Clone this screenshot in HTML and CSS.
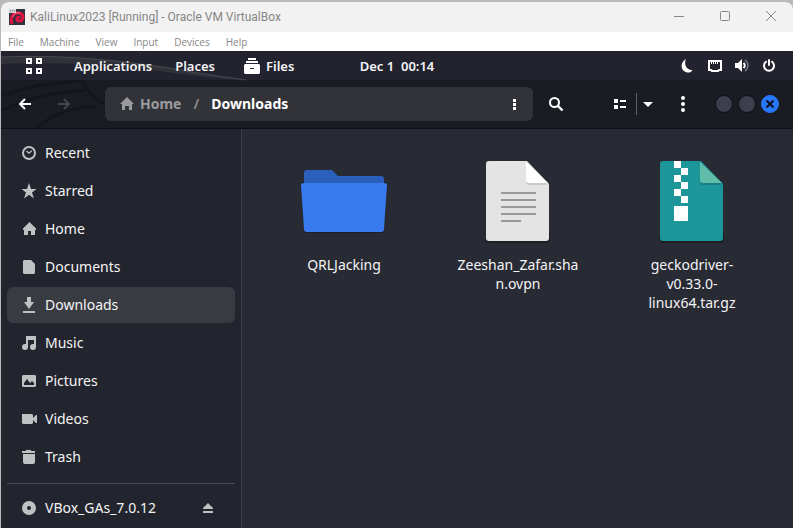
FILE: index.html
```html
<!DOCTYPE html>
<html lang="en">
<head>
<meta charset="utf-8">
<title>KaliLinux2023 [Running] - Oracle VM VirtualBox</title>
<link rel="stylesheet" href="styles.css">
</head>
<body>
<div class="window">
  <header class="titlebar">
    <svg class="app-icon" width="16" height="16" viewBox="0 0 16 16"><path fill="#30323e" d="M0 0h16v16H0z"/><path fill="none" stroke="#e0143f" stroke-width="3" d="M3 15C1 8 4 4 9 4c5 0 6 4 4 7-2 2-6 1-5-2 1-1 2-1 3 0"/><path fill="none" stroke="#ff8195" d="M4 8c1-4 4-5 7-4"/><path fill="#d5d5da" d="M0 0h7v4H0z"/><path stroke="#777" d="M1 2h1m1 0h1m1 0h1"/></svg>
    <h1 class="title">KaliLinux2023 [Running] - Oracle VM VirtualBox</h1>
    <div class="window-buttons">
      <button aria-label="Minimize"><svg width="12" height="12" viewBox="0 0 12 12"><path d="M1 5.500h10"/></svg></button>
      <button aria-label="Maximize"><svg width="12" height="12" viewBox="0 0 12 12"><rect x="1.500" y="0.500" width="9" height="9" rx="1"/></svg></button>
      <button aria-label="Close"><svg width="12" height="12" viewBox="0 0 12 12"><path d="M1 0l10 10M11 0L1 10"/></svg></button>
    </div>
  </header>
  <nav class="menubar">
    <button>File</button><button>Machine</button><button>View</button><button>Input</button><button>Devices</button><button>Help</button>
  </nav>
  <main class="desktop">
    <svg class="wallpaper" width="250" height="77" viewBox="0 0 250 77" aria-hidden="true">
      <path fill="#36363c" opacity=".8" d="M0 6c60-3 130 4 185 14 25 4 45 7 60 9-45-1-110-15-160-16C50 12 20 12 0 13z"/>
      <path fill="none" stroke="#55555a" opacity=".7" d="M0 6c60-3 130 4 185 14 25 4 45 7 60 9"/>
      <path fill="none" stroke="#12141a" stroke-width="3" opacity=".7" d="M0 45c25-9 50-14 78-15M0 60c30-14 55-20 84-20M80 30c10 12 12 20 30 26M35 77c20-16 35-20 60-22"/>
    </svg>
    <div class="panel">
      <div class="panel-left">
        <button class="activities" aria-label="Activities"><svg width="16" height="16" viewBox="0 0 16 16"><path fill="none" stroke="#fff" stroke-width="2" d="M1 1h4v4H1zM11 1h4v4h-4zM1 11h4v4H1zM11 11h4v4h-4z"/></svg></button>
        <button class="applications">Applications</button>
        <button class="places">Places</button>
        <button class="files"><svg width="16" height="16" viewBox="0 0 16 16"><path fill="#fff" d="M4 0h8v2H4zM2 3h12v2H2zM1 6h14l1 1v8l-1 1H1l-1-1V7z"/><path fill="#20212c" d="M6 10h4v1H6z"/></svg>Files</button>
      </div>
      <button class="clock">Dec 1&nbsp; 00:14</button>
      <div class="tray">
        <button aria-label="Night light"><svg width="16" height="16" viewBox="0 0 16 16"><path fill="#fff" d="M6 1C0 4 0 13 7 14.500c2.500.4 4.500-.5 5.500-2.500C7 12.500 3.500 7 6 1z"/></svg></button>
        <button aria-label="Network"><svg width="16" height="16" viewBox="0 0 16 16"><path fill="none" stroke="#fff" stroke-width="2" d="M2 3h12v9h-2l-1 1H5l-1-1H2z"/><path stroke="#fff" d="M4.500 3v3m2-3v3m2-3v3m2-3v3"/></svg></button>
        <button aria-label="Volume"><svg width="16" height="16" viewBox="0 0 16 16"><path fill="#fff" d="M1 5h3l4-4v13l-4-4H1z"/><path fill="none" stroke="#fff" stroke-width="2" d="M9.500 5c1.700 1.500 1.700 3.500 0 5"/><path fill="none" stroke="#77777f" stroke-width="1.500" d="M11 2c4 3 4 8 0 11"/></svg></button>
        <button aria-label="Power"><svg width="16" height="16" viewBox="0 0 16 16"><path fill="none" stroke="#fff" stroke-width="2" stroke-linecap="round" d="M8 2v5M5 3.700a5 5 0 1 0 6 0"/></svg></button>
      </div>
    </div>
    <div class="toolbar">
      <button class="back" aria-label="Back"><svg width="16" height="16" viewBox="0 0 16 16"><path fill="none" stroke="#fff" stroke-width="2" d="M14 8H4M8 3L3 8l5 5"/></svg></button>
      <button class="forward" aria-label="Forward" disabled><svg width="16" height="16" viewBox="0 0 16 16"><path fill="none" stroke="#44464b" stroke-width="2" d="M2 8h10M8 3l5 5-5 5"/></svg></button>
      <div class="pathbar">
        <a class="crumb" href="#home"><svg width="16" height="16" viewBox="0 0 16 16"><path fill="#9a9b9e" d="M8 1l7 7h-2v6h-3v-4H6v4H3V8H1z"/></svg>Home</a>
        <span class="slash">/</span>
        <a class="crumb current" href="#downloads">Downloads</a>
        <button class="path-menu" aria-label="Folder menu"><svg width="16" height="16" viewBox="0 0 16 16"><path fill="#fff" d="M7 3h3v3H7zM7 7h3v3H7zM7 11h3v3H7z"/></svg></button>
      </div>
      <button class="search" aria-label="Search"><svg width="16" height="16" viewBox="0 0 16 16"><circle cx="6.500" cy="6.500" r="4.500" fill="none" stroke="#fff" stroke-width="2"/><path stroke="#fff" stroke-width="2.400" d="M9.500 9.500l5 5"/></svg></button>
      <button class="view" aria-label="List view"><svg width="16" height="16" viewBox="0 0 16 16"><path fill="#fff" d="M2 3h4v4H2zM2 9h4v4H2zM8 4h6v2H8zM8 10h6v2H8z"/></svg></button>
      <button class="view-options" aria-label="View options"><svg width="12" height="16" viewBox="0 0 12 16"><path fill="#fff" d="M1 6h10l-5 5z"/></svg></button>
      <button class="menu" aria-label="Menu"><svg width="16" height="16" viewBox="0 0 16 16"><circle cx="8" cy="2" r="2" fill="#fff"/><circle cx="8" cy="8" r="2" fill="#fff"/><circle cx="8" cy="14" r="2" fill="#fff"/></svg></button>
      <div class="circles">
        <button aria-label="Minimize Files"></button>
        <button aria-label="Maximize Files"></button>
        <button class="close" aria-label="Close Files"><svg width="10" height="10" viewBox="0 0 10 10"><path stroke="#10131b" stroke-width="2.200" d="M1.500 1.500l7 7m0-7l-7 7"/></svg></button>
      </div>
    </div>
    <div class="body">
      <nav class="sidebar">
        <a href="#recent"><svg width="16" height="16" viewBox="0 0 16 16"><circle cx="8" cy="8" r="6" fill="none" stroke="#c0c1c3" stroke-width="2"/><path fill="none" stroke="#c0c1c3" stroke-width="1.200" d="M5.500 6L8 8.200 10.800 5.800"/></svg>Recent</a>
        <a href="#starred"><svg width="16" height="16" viewBox="0 0 16 16"><path fill="#c0c1c3" d="M8 0l2 6h5.500L11 9.500l2 6-5-3.700-5 3.700 2-6L.5 6H6z"/></svg>Starred</a>
        <a href="#home"><svg width="16" height="16" viewBox="0 0 16 16"><path fill="#c0c1c3" d="M8.500 1l6.500 6.500V9h-1v5h-4v-4H7v4H3V9H2V7.500z"/></svg>Home</a>
        <a href="#documents"><svg width="16" height="16" viewBox="0 0 16 16"><path fill="#c0c1c3" d="M3 1h7l4 4v9l-1 1H3l-1-1V2z"/></svg>Documents</a>
        <a class="active" href="#downloads"><svg width="16" height="16" viewBox="0 0 16 16"><path fill="#c0c1c3" d="M6 0h4v5h3l-5 7-5-7h3zM2 14h12v2H2z"/></svg>Downloads</a>
        <a href="#music"><svg width="16" height="16" viewBox="0 0 16 16"><path fill="#c0c1c3" d="M5 1h10v11a3 3 0 1 1-3-3h1V5H7v7a3 3 0 1 1-3-3h1z"/></svg>Music</a>
        <a href="#pictures"><svg width="16" height="16" viewBox="0 0 16 16"><path fill="#c0c1c3" fill-rule="evenodd" d="M2 2h12l1 1v10l-1 1H2l-1-1V3zm1 10h10v-2l-2-2-2 2-3-4-3 4z"/></svg>Pictures</a>
        <a href="#videos"><svg width="16" height="16" viewBox="0 0 16 16"><path fill="#c0c1c3" d="M1 3h10l1 1v3l3-3h1v8h-1l-3-3v3l-1 1H2l-1-1z"/></svg>Videos</a>
        <a href="#trash"><svg width="16" height="16" viewBox="0 0 16 16"><path fill="#c0c1c3" d="M1 2h4V1h5v1h4v2H1zM2 5h12v8q0 2-2 2H4q-2 0-2-2z"/></svg>Trash</a>
        <hr>
        <div class="drive">
          <a href="#vbox"><svg width="16" height="16" viewBox="0 0 16 16"><circle cx="8" cy="8" r="4.500" fill="none" stroke="#c0c1c3" stroke-width="5"/></svg>VBox_GAs_7.0.12</a>
          <button aria-label="Eject"><svg width="12" height="12" viewBox="0 0 12 12"><path fill="#c0c1c3" d="M6 1l5 5v1H1V6zM1 9h10v2H1z"/></svg></button>
        </div>
      </nav>
      <section class="grid">
        <a class="file" href="#qrljacking">
          <svg width="96" height="96" viewBox="0 0 96 96"><path fill="#16181f" d="M6 30l3 51h78l3-51z" opacity=".6"/><path fill="#2a60bc" d="M8 36V21q0-3 3-3h25l6 6h43q3 0 3 3v9z"/><path fill="#377bee" d="M5 33q0-2 3-2h80q3 0 3 2l-3 44q0 3-3 3H11q-3 0-3-3z"/></svg>
          <span>QRLJacking</span>
        </a>
        <a class="file" href="#ovpn">
          <svg width="96" height="96" viewBox="0 0 96 96"><path fill="#15161d" opacity=".6" d="M16 80h64v8q0 3-3 3H19q-3 0-3-3z"/><path fill="#e4e4e4" d="M16 12q0-3 3-3h38l22 23v54q0 3-3 3H19q-3 0-3-3z"/><path fill="#c9c9c9" d="M56 12v18q0 3 3 3h19z"/><path fill="#fff" d="M56 10v18q0 3 3 3h19z"/><path stroke="#999" stroke-width="2" d="M31 41h35M31 48h35M31 55h35M31 62h35M31 69h20"/></svg>
          <span>Zeeshan_Zafar.shan.ovpn</span>
        </a>
        <a class="file" href="#geckodriver">
          <svg width="96" height="96" viewBox="0 0 96 96"><path fill="#15161d" opacity=".6" d="M16 80h64v8q0 3-3 3H19q-3 0-3-3z"/><path fill="#1d969a" d="M16 12q0-3 3-3h38l22 23v54q0 3-3 3H19q-3 0-3-3z"/><path fill="#188083" d="M56 12v18q0 3 3 3h19z"/><path fill="#5fbda9" d="M56 10v18q0 3 3 3h19z"/><path fill="#fff" d="M30 9h7v7h-7zM37 16h7v7h-7zM30 23h7v7h-7zM37 30h7v7h-7zM30 37h7v7h-7zM37 44h7v7h-7zM30 54h14v15H30z"/></svg>
          <span>geckodriver-v0.33.0-linux64.tar.gz</span>
        </a>
      </section>
    </div>
  </main>
</div>
</body>
</html>
```
FILE: styles.css
```css
* { box-sizing: border-box; }
body {
  margin: 0;
  background: #b9b9b9;
  font-family: "Noto Sans", sans-serif;
  font-size: 14px;
}
button {
  display: flex;
  align-items: center;
  justify-content: center;
  margin: 0;
  padding: 0;
  border: 0;
  background: none;
  color: inherit;
  font: inherit;
}
a { color: inherit; text-decoration: none; }
svg { display: block; flex: none; }

.window {
  display: flex;
  flex-direction: column;
  min-height: 100vh;
  padding: 1px 0 0 1px;
}
.titlebar {
  display: flex;
  align-items: center;
  height: 31px;
  border-top: 1px solid #b9b9b9;
  border-radius: 8px 8px 0 0;
  padding: 0 0 0 8px;
  background: #f2f2f2;
  color: #868686;
}
.title {
  flex: 1;
  margin: 0 0 0 5px;
  font-family: Roboto, sans-serif;
  font-size: 12px;
  font-weight: 400;
}
.window-buttons { display: flex; margin-right: -1px; }
.window-buttons button { width: 46px; height: 30px; }
.window-buttons svg { fill: none; stroke: #868686; }
.menubar {
  display: flex;
  gap: 16px;
  height: 19px;
  padding: 0 7px;
  background: #fff;
  color: #868686;
  font-family: "Open Sans", sans-serif;
  font-size: 10px;
}

.desktop {
  position: relative;
  display: flex;
  flex: 1;
  flex-direction: column;
  background: #1a1c23;
  color: #f4f4f5;
}
.wallpaper { position: absolute; top: 0; left: 0; }
.panel {
  display: grid;
  grid-template-columns: 1fr auto 1fr;
  align-items: center;
  height: 29px;
  background: #22232f;
  font-size: 13px;
  font-weight: 600;
  line-height: 18px;
}
.panel > *, .toolbar > * { position: relative; }
.panel-left { display: flex; align-items: center; padding-left: 25px; }
.applications { margin-left: 32px; }
.places { margin-left: 23px; }
.files { gap: 6px; margin-left: 29px; }
.tray { display: flex; justify-content: flex-end; gap: 11px; padding-right: 16px; }

.toolbar {
  display: flex;
  align-items: center;
  height: 49px;
  padding: 0 14px 0 4px;
  border-bottom: 1px solid #101118;
}
.toolbar button { height: 34px; }
.back, .forward { width: 39px; }
.pathbar {
  display: flex;
  flex: 1;
  align-items: center;
  height: 34px;
  margin-left: 22px;
  padding: 0 11px 0 14px;
  border-radius: 6px;
  background: #323338;
  font-weight: 700;
  line-height: 18px;
}
.crumb { display: flex; gap: 5px; align-items: center; color: #9a9b9e; }
.crumb.current { color: #fff; }
.slash { margin: 0 12px; color: #85868a; }
.path-menu { margin-left: auto; }
.search { width: 36px; margin-left: 5px; }
.view { width: 32px; margin-left: 30px; }
.toolbar .view-options { width: 23px; height: 22px; border-left: 1px solid #5c5e65; }
.menu { width: 36px; margin-left: 6px; }
.circles { display: flex; gap: 5px; margin-left: 14px; }
.toolbar .circles button {
  width: 18px;
  height: 18px;
  border: 1px solid #0f1117;
  border-radius: 50%;
  background: #3d3f4e;
}
.toolbar .circles .close { border-color: #2777ff; background: #2777ff; }

.body { display: flex; flex: 1; }
.sidebar {
  display: flex;
  flex-direction: column;
  gap: 2px;
  width: 241px;
  padding: 6px 6px 0;
  border-right: 1px solid #3e4049;
  background: #23252e;
  line-height: 18px;
}
.sidebar a {
  display: flex;
  flex: none;
  gap: 8px;
  align-items: center;
  height: 36px;
  padding: 0 14px;
  border-radius: 6px;
}
.sidebar .active { background: #393b42; }
.sidebar hr {
  width: 100%;
  height: 1px;
  margin: 6px 0 4px;
  border: 0;
  background: #484a53;
}
.drive { display: flex; justify-content: space-between; }
.drive button { width: 12px; height: 36px; margin-right: 21px; }
.grid {
  display: grid;
  flex: 1;
  grid-template-columns: repeat(auto-fill, minmax(160px, 1fr));
  align-content: start;
  padding: 23px 14px 0 15px;
  background: #282a34;
}
.file { display: flex; flex-direction: column; gap: 7px; align-items: center; }
.file span {
  width: 128px;
  line-height: 19px;
  text-align: center;
  overflow-wrap: anywhere;
}
```
